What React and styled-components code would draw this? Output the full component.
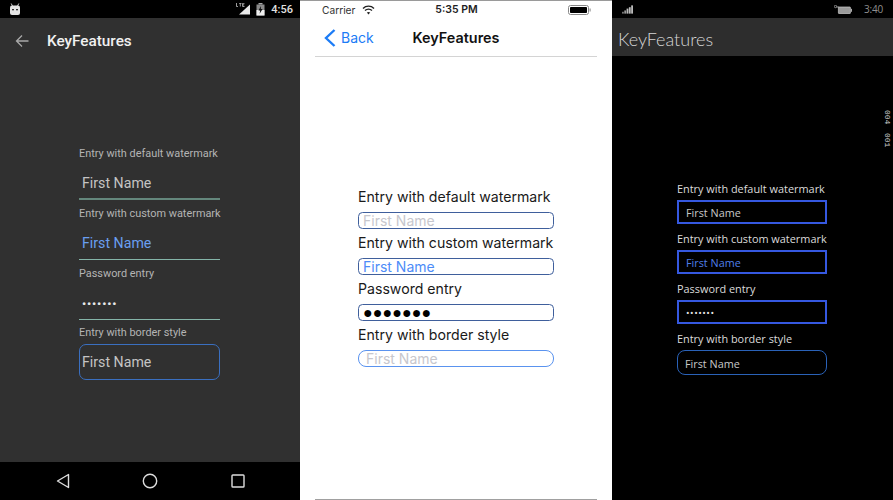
import React from "react";
import styled, { createGlobalStyle } from "styled-components";

const Global = createGlobalStyle`
  html, body { margin: 0; padding: 0; background: #fff; }
  #root { width: 893px; height: 500px; overflow: hidden; }
  * { box-sizing: border-box; }
`;

const Page = styled.div`
  display: grid;
  grid-template-columns: 300px 312px 281px;
  width: 893px;
  height: 500px;
`;

/* ---------- Android ---------- */
const AndroidScreen = styled.section`
  display: flex;
  flex-direction: column;
  background: #303030;
  font-family: Roboto, "Liberation Sans", sans-serif;
`;
const AndroidStatus = styled.div`
  height: 18px;
  background: #000;
  display: flex;
  align-items: center;
  padding: 0 7px 0 9px;
  color: #e0e0e0;
  font-size: 11px;
  font-weight: 500;
`;
const AndroidStatusRight = styled.div`
  margin-left: auto;
  display: flex;
  align-items: center;
  gap: 6px;
`;
const AndroidToolbar = styled.header`
  height: 46px;
  display: flex;
  align-items: center;
  padding: 0 0 0 15px;
  gap: 18px;
  color: #f0f0f0;
  font-size: 15.3px;
  font-weight: 500;
`;
const AndroidBody = styled.main`
  flex: 1;
  padding: 76.6px 0 0 79px;
`;
const AndroidForm = styled.div`
  width: 141px;
  display: flex;
  flex-direction: column;
`;
const AndroidLabel = styled.div`
  height: 16px;
  line-height: 18px;
  font-size: 10.9px;
  white-space: nowrap;
  color: #b4b4b4;
  margin-top: 4.8px;
`;
const AndroidField = styled.div`
  height: 38.9px;
  padding: 10px 0 0 3px;
  line-height: 24px;
  font-size: 14.2px;
  color: ${(p) => p.$color || "#c4c4c4"};
  border-bottom: ${(p) => (p.$focused ? "2px solid #64877c" : "1px solid #85b5a9")};
  white-space: nowrap;
`;
const AndroidBoxField = styled.div`
  height: 36px;
  margin-top: 4px;
  padding-left: 2px;
  display: flex;
  align-items: center;
  font-size: 14.2px;
  color: #c4c4c4;
  border: 1px solid #3a6fc0;
  border-radius: 7px;
`;
const AndroidDots = styled.span`
  font-size: 11.5px;
  letter-spacing: 0.9px;
  font-weight: 700;
  color: #e8e8e8;
`;
const AndroidNav = styled.nav`
  height: 38px;
  background: #000;
  display: grid;
  grid-template-columns: repeat(3, 87.5px);
  justify-content: center;
  align-items: center;
  justify-items: center;
`;

/* ---------- iOS ---------- */
const IosScreen = styled.section`
  display: flex;
  flex-direction: column;
  background: #fff;
  padding: 0 15px;
  font-family: Inter, "Liberation Sans", sans-serif;
  color: #111;
  position: relative;
  border-top: 1px solid #9a9a9a;
`;
const IosStatus = styled.div`
  height: 17px;
  display: grid;
  grid-template-columns: 1fr auto 1fr;
  align-items: center;
  padding: 0 6px 0 7px;
  font-size: 10.2px;
  color: #333;
`;
const IosCarrier = styled.div`
  display: flex;
  align-items: center;
  gap: 7px;
`;
const IosTime = styled.div`
  font-weight: 600;
  font-size: 10.5px;
  color: #222;
`;
const IosBatteryWrap = styled.div`
  justify-self: end;
  display: flex;
`;
const IosNav = styled.header`
  height: 39px;
  display: grid;
  grid-template-columns: 1fr auto 1fr;
  align-items: center;
  border-bottom: 1px solid #d4d4d4;
  padding: 1px 9px 0;
`;
const IosBack = styled.div`
  display: flex;
  align-items: center;
  gap: 5px;
  color: #1c7cf6;
  font-size: 14px;
`;
const IosTitle = styled.div`
  font-size: 14.4px;
  font-weight: 600;
  color: #111;
`;
const IosBody = styled.main`
  flex: 1;
  padding: 126px 0 0 43px;
  border-bottom: 1px solid #a0a0a0;
`;
const IosForm = styled.div`
  width: 196px;
  display: flex;
  flex-direction: column;
`;
const IosLabel = styled.div`
  height: 29px;
  line-height: 20px;
  padding-top: 4px;
  font-size: 14.13px;
  white-space: nowrap;
  color: #1a1a1a;
`;
const IosField = styled.div`
  height: 17px;
  border: 1px solid ${(p) => p.$border || "#3f5f9c"};
  border-radius: 4.5px;
  padding-left: ${(p) => p.$inset || 4}px;
  display: flex;
  align-items: center;
  font-size: 14px;
  color: ${(p) => p.$color || "#c7c7cd"};
  white-space: nowrap;
`;
const IosRoundField = styled(IosField)`
  border-radius: 8px;
`;
const IosDots = styled.span`
  font-size: 16px;
  letter-spacing: 0.1px;
  color: #000;
  font-family: "Liberation Sans", sans-serif;
`;

/* ---------- Windows ---------- */
const WinScreen = styled.section`
  display: flex;
  flex-direction: column;
  background: #000;
  position: relative;
  font-family: "Open Sans", "Noto Sans", sans-serif;
`;
const WinStatus = styled.div`
  height: 18px;
  display: flex;
  align-items: center;
  padding: 0 10px 0 10px;
  color: #8f8f8f;
  font-size: 10px;
  letter-spacing: -0.2px;
`;
const WinStatusRight = styled.div`
  margin-left: auto;
  display: flex;
  align-items: center;
  gap: 12px;
`;
const WinTitleBar = styled.header`
  height: 38px;
  background: #2d2d2d;
  color: #d6d6d6;
  font-family: Lato, "Open Sans", sans-serif;
  font-size: 18px;
  font-weight: 300;
  display: flex;
  align-items: center;
  padding: 4px 0 0 6px;
`;
const WinBody = styled.main`
  flex: 1;
  padding: 118px 0 0 65px;
`;
const WinForm = styled.div`
  width: 150px;
  display: flex;
  flex-direction: column;
`;
const WinLabel = styled.div`
  height: 18px;
  margin-top: 8px;
  line-height: 14px;
  font-size: 10.9px;
  white-space: nowrap;
  color: #dcdcdc;
`;
const WinField = styled.div`
  height: 24px;
  border: 2px solid #3558e0;
  padding-left: 7px;
  display: flex;
  align-items: center;
  font-size: 10.8px;
  color: ${(p) => p.$color || "#c8c8c8"};
  white-space: nowrap;
`;
const WinRoundField = styled.div`
  height: 25px;
  border: 1px solid #2a62b8;
  border-radius: 8px;
  padding: 1px 0 0 7px;
  display: flex;
  align-items: center;
  font-size: 10.8px;
  color: #c8c8c8;
`;
const WinDots = styled.span`
  font-size: 9.5px;
  letter-spacing: 0.5px;
  color: #e8e8e8;
`;
const FrameCounter = styled.div`
  position: absolute;
  right: 1px;
  top: 110px;
  writing-mode: vertical-rl;
  display: flex;
  gap: 9px;
  font-family: "Liberation Mono", monospace;
  font-size: 8px;
  color: #d0d0d0;
`;

/* ---------- drawings ---------- */
const RobotIcon = () => (
  <svg width="12" height="13" viewBox="0 0 12 13">
    <path d="M2.2 0.5 3.5 3M9.8 0.5 8.5 3" stroke="#ddd" strokeWidth="0.9" />
    <rect x="1" y="2.5" width="10" height="9.5" rx="2" fill="#e4e4e4" />
    <rect x="3" y="6" width="2" height="1.3" fill="#333" />
    <rect x="7" y="6" width="2" height="1.3" fill="#333" />
  </svg>
);
const LteIcon = () => (
  <svg width="14" height="12" viewBox="0 0 14 12">
    <path d="M14 1.5V11.5H3Z" fill="#e8e8e8" />
    <path d="M0.5 0V3.5H2M3 0.3H5.6M4.3 0.3V3.5M8.5 0.3H6.6V3.5H8.5M6.6 1.9H8.2" stroke="#ddd" strokeWidth="0.7" fill="none" />
  </svg>
);
const AndroidBattery = () => (
  <svg width="9" height="13" viewBox="0 0 9 13">
    <rect x="2.5" y="0" width="4" height="1.5" fill="#aaa" />
    <rect x="0.5" y="1.5" width="8" height="11" fill="#8a8a8a" />
    <rect x="0.5" y="7" width="8" height="5.5" fill="#eee" />
    <path d="M5 3 2.5 7.5H4.2L3.6 10.8 6.6 6H4.8Z" fill="#111" />
  </svg>
);
const BackArrow = () => (
  <svg width="14" height="14" viewBox="0 0 14 14" fill="none" stroke="#a8a8a8" strokeWidth="1.3">
    <path d="M13.5 7H1.5M7 1.5 1.5 7 7 12.5" />
  </svg>
);
const NavBack = () => (
  <svg width="14" height="16" viewBox="0 0 14 16" fill="none" stroke="#ddd" strokeWidth="1.4" strokeLinejoin="round">
    <path d="M12.5 1.5V14.5L1.5 8Z" />
  </svg>
);
const NavHome = () => (
  <svg width="16" height="16" viewBox="0 0 16 16" fill="none" stroke="#ddd" strokeWidth="1.4">
    <circle cx="8" cy="8" r="6.7" />
  </svg>
);
const NavRecent = () => (
  <svg width="14" height="14" viewBox="0 0 14 14" fill="none" stroke="#ddd" strokeWidth="1.4">
    <rect x="1" y="1" width="12" height="12" rx="0.8" />
  </svg>
);
const WifiIcon = () => (
  <svg width="13" height="10" viewBox="0 0 13 10" fill="none" stroke="#222" strokeWidth="1.4">
    <path d="M1 3.4C4 .4 9 .4 12 3.4M3 5.5C5 3.7 8 3.7 10 5.5" />
    <path d="M6.5 9.5 4.8 7.6C5.8 6.8 7.2 6.8 8.2 7.6Z" fill="#222" stroke="none" />
  </svg>
);
const IosBattery = () => (
  <svg width="23" height="10" viewBox="0 0 23 10">
    <rect x="0.5" y="0.5" width="20" height="9" rx="2" fill="none" stroke="#888" />
    <rect x="2" y="2" width="17" height="6" rx="0.8" fill="#000" />
    <rect x="21.5" y="3.5" width="1.2" height="3" fill="#999" />
  </svg>
);
const IosChevron = () => (
  <svg width="12" height="18" viewBox="0 0 12 18" fill="none" stroke="#1c7cf6" strokeWidth="2.4">
    <path d="M10.5 1 2 9l8.5 8" />
  </svg>
);
const WinSignal = () => (
  <svg width="11" height="9" viewBox="0 0 12 9" fill="#bbb">
    <rect x="0" y="7" width="2" height="2" fill="#777" />
    <rect x="2.5" y="5.5" width="2" height="3.5" fill="#999" />
    <rect x="5" y="3.5" width="2" height="5.5" />
    <rect x="7.5" y="2" width="2" height="7" />
    <rect x="10" y="0" width="2" height="9" />
  </svg>
);
const WinBattery = () => (
  <svg width="18" height="9" viewBox="0 0 18 9">
    <circle cx="1.5" cy="1.5" r="1.2" fill="none" stroke="#bbb" strokeWidth="0.7" />
    <path d="M2.5 2H5" stroke="#bbb" strokeWidth="0.8" />
    <rect x="4.4" y="2" width="12" height="6.5" rx="0.5" fill="#999" stroke="#ccc" strokeWidth="0.7" />
    <rect x="16.8" y="3.8" width="1.2" height="3" fill="#aaa" />
  </svg>
);

export default function App() {
  return (
    <Page>
      <Global />
      <AndroidScreen>
        <AndroidStatus>
          <RobotIcon />
          <AndroidStatusRight>
            <LteIcon />
            <AndroidBattery />
            <span>4:56</span>
          </AndroidStatusRight>
        </AndroidStatus>
        <AndroidToolbar>
          <BackArrow />
          <span>KeyFeatures</span>
        </AndroidToolbar>
        <AndroidBody>
          <AndroidForm>
            <AndroidLabel>Entry with default watermark</AndroidLabel>
            <AndroidField $focused>First Name</AndroidField>
            <AndroidLabel>Entry with custom watermark</AndroidLabel>
            <AndroidField $color="#6a9ff0">First Name</AndroidField>
            <AndroidLabel>Password entry</AndroidLabel>
            <AndroidField><AndroidDots>•••••••</AndroidDots></AndroidField>
            <AndroidLabel>Entry with border style</AndroidLabel>
            <AndroidBoxField>First Name</AndroidBoxField>
          </AndroidForm>
        </AndroidBody>
        <AndroidNav>
          <NavBack />
          <NavHome />
          <NavRecent />
        </AndroidNav>
      </AndroidScreen>

      <IosScreen>
        <IosStatus>
          <IosCarrier>Carrier <WifiIcon /></IosCarrier>
          <IosTime>5:35 PM</IosTime>
          <IosBatteryWrap><IosBattery /></IosBatteryWrap>
        </IosStatus>
        <IosNav>
          <IosBack><IosChevron />Back</IosBack>
          <IosTitle>KeyFeatures</IosTitle>
          <span />
        </IosNav>
        <IosBody>
          <IosForm>
            <IosLabel>Entry with default watermark</IosLabel>
            <IosField>First Name</IosField>
            <IosLabel>Entry with custom watermark</IosLabel>
            <IosField $color="#4d8cf8">First Name</IosField>
            <IosLabel>Password entry</IosLabel>
            <IosField><IosDots>●●●●●●●</IosDots></IosField>
            <IosLabel>Entry with border style</IosLabel>
            <IosRoundField $border="#5a93ef" $inset={7}>First Name</IosRoundField>
          </IosForm>
        </IosBody>
      </IosScreen>

      <WinScreen>
        <WinStatus>
          <WinSignal />
          <WinStatusRight>
            <WinBattery />
            <span>3:40</span>
          </WinStatusRight>
        </WinStatus>
        <WinTitleBar>KeyFeatures</WinTitleBar>
        <WinBody>
          <WinForm>
            <WinLabel>Entry with default watermark</WinLabel>
            <WinField>First Name</WinField>
            <WinLabel>Entry with custom watermark</WinLabel>
            <WinField $color="#4f7fe8">First Name</WinField>
            <WinLabel>Password entry</WinLabel>
            <WinField><WinDots>•••••••</WinDots></WinField>
            <WinLabel>Entry with border style</WinLabel>
            <WinRoundField>First Name</WinRoundField>
          </WinForm>
        </WinBody>
        <FrameCounter>
          <span>004</span>
          <span>001</span>
        </FrameCounter>
      </WinScreen>
    </Page>
  );
}
